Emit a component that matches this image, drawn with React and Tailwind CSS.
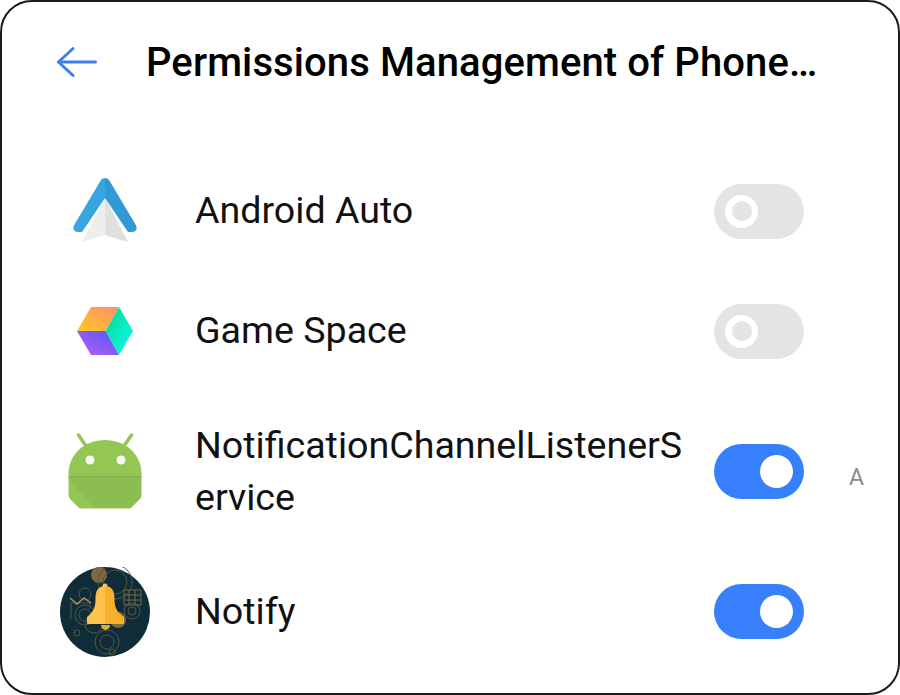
// Permission list screen with app rows and toggles
function BackArrow() {
  return (
    <svg width="44" height="34" viewBox="0 0 44 34" fill="none" stroke="#3f7fea" strokeWidth="3" strokeLinecap="round" strokeLinejoin="round">
      <path d="M2.5 17H39.500" />
      <path d="M17 3.500L2.500 17L17 30.500" />
    </svg>
  );
}

function AndroidAutoIcon() {
  return (
    <svg width="66" height="68" viewBox="0 0 66 68">
      <path d="M33 21L10 65L33 58L56 65Z" fill="#eeeeee" />
      <path d="M33 21V58L56 65Z" fill="#e0e0e0" />
      <path d="M33 1C31 1 29.500 2 28.500 3.700L2.500 47.500C0 51.500 2 55 6 55H10L33 21Z" fill="#38a5e0" />
      <path d="M33 1C35 1 36.500 2 37.500 3.700L63.500 47.500C66 51.500 64 55 60 55H56L33 21Z" fill="#3099d6" />
    </svg>
  );
}

function GameSpaceIcon() {
  return (
    <svg width="58" height="50" viewBox="0 0 58 50">
      <defs>
        <linearGradient id="gsTop" x1="0" y1="1" x2="1" y2="0">
          <stop offset="0" stopColor="#ffc81e" />
          <stop offset="1" stopColor="#fb8f6e" />
        </linearGradient>
        <linearGradient id="gsRight" x1="0" y1="0" x2="1" y2="1">
          <stop offset="0" stopColor="#0bd58f" />
          <stop offset="1" stopColor="#0cfdf0" />
        </linearGradient>
        <linearGradient id="gsLeft" x1="1" y1="0" x2="0" y2="1">
          <stop offset="0" stopColor="#4a5cf7" />
          <stop offset="1" stopColor="#c05cf2" />
        </linearGradient>
      </defs>
      <path d="M15 1H43L29.500 25H1Z" fill="url(#gsTop)" />
      <path d="M43 1L57 25L43 49L29.500 25Z" fill="url(#gsRight)" />
      <path d="M1 25H29.500L43 49H15Z" fill="url(#gsLeft)" />
    </svg>
  );
}

function AndroidIcon() {
  return (
    <svg width="74" height="78" viewBox="0 0 74 78">
      <path d="M10.500 2L18 13M63.500 2L56 13" stroke="#9ac45a" strokeWidth="3.500" strokeLinecap="round" />
      <path d="M0.500 41C0.500 21 17 7 37 7C57 7 73.500 21 73.500 41V62C73.500 63.500 73 64.500 72 66L64 74C63 75 62 75.500 60 75.500H14C12 75.500 11 75 10 74L2 66C1 64.500 0.500 63.500 0.500 62Z" fill="#94c653" />
      <path d="M1 43H73V62C73 63.500 72.500 64.500 71.500 65.500L63.500 73.500C62.500 74.500 61.500 75 60 75H27L1 47Z" fill="#8bbd53" />
      <path d="M0.500 43H73.500V44.500H0.500Z" fill="#86b550" />
      <circle cx="22" cy="27" r="4.500" fill="#f4f8ec" />
      <circle cx="53" cy="27" r="4.500" fill="#f4f8ec" />
    </svg>
  );
}

function NotifyIcon() {
  return (
    <svg width="90" height="90" viewBox="0 0 90 90">
      <circle cx="45" cy="45" r="45" fill="#0f2c39" />
      <circle cx="39" cy="8" r="8" fill="#7d6840" />
      <g fill="none" stroke="#55563f" strokeWidth="1">
        <circle cx="55" cy="15" r="12" />
        <circle cx="55" cy="15" r="17" />
        <circle cx="25" cy="27" r="6" />
        <circle cx="25" cy="48" r="10" />
        <circle cx="25" cy="48" r="6" />
        <circle cx="34" cy="57" r="9" />
        <circle cx="17" cy="66" r="3" />
        <circle cx="47" cy="75" r="12" />
        <circle cx="47" cy="75" r="7" />
        <circle cx="52" cy="85" r="3" />
        <circle cx="72" cy="44" r="8" />
        <circle cx="72" cy="44" r="4" />
        <path d="M64 23H81V38H64ZM64 28H81M64 33H81M69 23V38M75 23V38" stroke="#7d6840" />
        <path d="M11 36H30V42M11 36V52" />
        <path d="M10 31L17 37L24 31L31 36" stroke="#a88f58" strokeWidth="1.500" />
      </g>
      <circle cx="58" cy="53" r="8" fill="#7d6840" />
      <path d="M41 56A4.500 5 0 0 0 50 56Z" fill="#f0a91f" transform="translate(0 2)" />
      <circle cx="45" cy="19" r="2.500" fill="#ffc74f" />
      <path d="M45 19C38 19 35.500 24 35.500 32C35.500 41 33 45 27 50V57H45Z" fill="#fdc24c" />
      <path d="M45 19C52 19 54.500 24 54.500 32C54.500 41 57 45 64 50V57H45Z" fill="#f8b02c" />
    </svg>
  );
}

function Toggle({ on }) {
  return (
    <div className={`flex h-[55px] w-[90px] shrink-0 items-center rounded-full px-[11px] ${on ? "justify-end bg-[#387ffb]" : "justify-start bg-[#e4e4e4]"}`}>
      <div className="flex h-[33px] w-[33px] items-center justify-center rounded-full bg-white">
        {!on && <div className="h-[20px] w-[20px] rounded-full bg-[#e4e4e4]" />}
      </div>
    </div>
  );
}

const apps = [
  { name: "Android Auto", icon: <AndroidAutoIcon />, on: false, height: "h-[120px]" },
  { name: "Game Space", icon: <GameSpaceIcon />, on: false, height: "h-[120px]" },
  { name: "NotificationChannelListenerS ervice", icon: <AndroidIcon />, on: true, height: "h-[161px]", side: "A" },
  { name: "Notify", icon: <NotifyIcon />, on: true, height: "h-[119px]" },
];

export default function App() {
  return (
    <div className="h-[695px] w-[900px] overflow-hidden bg-white font-['Roboto',sans-serif] antialiased">
      <div className="h-full w-full rounded-[32px] border-2 border-[#1c1c1c] pl-[54px]">
        {/* Header */}
        <div className="flex h-[120px] items-center">
          <div className="flex w-[90px] shrink-0 items-center">
            <BackArrow />
          </div>
          <h1 className="whitespace-nowrap pt-[2px] text-[40px] font-medium leading-none tracking-[0.1px] text-black">Permissions Management of Phone…</h1>
        </div>

        {/* App rows */}
        <div className="mt-[29px]">
          {apps.map((app) => (
            <div key={app.name} className={`flex items-center ${app.height}`}>
              <div className="ml-[4px] flex w-[90px] shrink-0 items-center justify-center">{app.icon}</div>
              <div className="ml-[45px] w-[519px] shrink-0 pb-[2px] text-[37.6px] leading-[52px] text-[#111] break-words">
                {app.name}
              </div>
              <Toggle on={app.on} />
              {app.side && <span className="ml-[45px] mt-[12px] text-[23px] leading-none text-[#8a8a8a]">{app.side}</span>}
            </div>
          ))}
        </div>
      </div>
    </div>
  );
}
